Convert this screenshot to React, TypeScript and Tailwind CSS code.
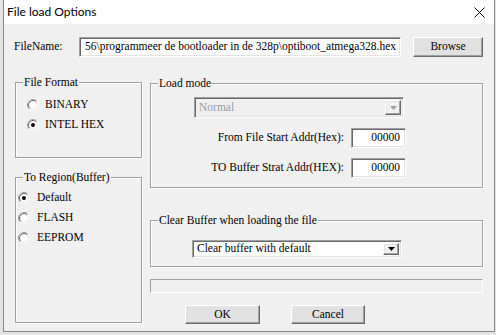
import React from "react";

const sunken =
  "border border-t-[#a0a0a0] border-l-[#a0a0a0] border-b-white border-r-white shadow-[inset_1px_1px_0_#696969,inset_-1px_-1px_0_#e3e3e3]";
const raised =
  "border border-t-white border-l-white border-b-[#696969] border-r-[#696969] shadow-[inset_-1px_-1px_0_#a0a0a0,inset_1px_1px_0_#e3e3e3]";
const etched = "border border-[#a0a0a0] shadow-[inset_1px_1px_0_#ffffff,1px_1px_0_#ffffff]";

function Radio({ checked }: { checked?: boolean }) {
  return (
    <svg width="12" height="12" viewBox="0 0 12 12" className="shrink-0">
      <circle cx="6" cy="6" r="5" fill="#ffffff" />
      <path d="M2.11 9.89 A5.5 5.5 0 0 1 9.89 2.11" fill="none" stroke="#a0a0a0" strokeWidth="1" />
      <path d="M2.82 9.18 A4.5 4.5 0 0 1 9.18 2.82" fill="none" stroke="#696969" strokeWidth="1" />
      <path d="M9.89 2.11 A5.5 5.5 0 0 1 2.11 9.89" fill="none" stroke="#ffffff" strokeWidth="1" />
      <path d="M9.18 2.82 A4.5 4.5 0 0 1 2.82 9.18" fill="none" stroke="#e3e3e3" strokeWidth="1" />
      {checked && <circle cx="6" cy="6" r="2" fill="#000000" />}
    </svg>
  );
}

function Group({
  label,
  className,
  children,
}: {
  label: string;
  className: string;
  children?: React.ReactNode;
}) {
  return (
    <div className={`relative ${etched} ${className}`}>
      <span className="absolute left-[7px] top-[-8px] px-[1px] bg-[#f0f0f0] leading-[14px] whitespace-nowrap">
        {label}
      </span>
      {children}
    </div>
  );
}

function Combo({
  text,
  disabled,
  className,
}: {
  text: string;
  disabled?: boolean;
  className: string;
}) {
  return (
    <div
      className={`${sunken} ${className} flex items-stretch p-[2px] ${
        disabled ? "bg-[#f0f0f0]" : "bg-white"
      }`}
    >
      <div
        className={`flex-1 flex items-center pl-[2px] ${
          disabled ? "text-[#9a9a9a]" : "text-black"
        }`}
      >
        {text}
      </div>
      <div className={`w-[16px] bg-[#f0f0f0] ${raised} flex items-center justify-center`}>
        <svg width="7" height="4" viewBox="0 0 7 4">
          <path d="M0 0 H7 L3.5 4 Z" fill={disabled ? "#a0a0a0" : "#000000"} />
        </svg>
      </div>
    </div>
  );
}

function Field({ label }: { label: string }) {
  return (
    <div className="flex justify-end items-center gap-[7px] pr-[76px]">
      <span className="whitespace-nowrap">{label}</span>
      <div className={`${sunken} bg-white w-[55px] h-[20px] flex items-center justify-end pr-[5px]`}>
        00000
      </div>
    </div>
  );
}

export default function App() {
  return (
    <div className="w-[496px] h-[335px] bg-[#e4e4e4] overflow-hidden text-[11.5px] text-black font-['Liberation_Serif','Times_New_Roman',serif]">
      <div className="ml-[3px] w-[492px] h-[332px] border border-t-0 border-[#8a8a8a] bg-[#f0f0f0] flex flex-col">
        {/* title bar */}
        <div className="h-[24px] bg-white flex items-center justify-between pl-[3px] pr-[9px] shrink-0">
          <span className="font-['Lato','Liberation_Sans',sans-serif] text-[12px] text-black">
            File load Options
          </span>
          <svg width="11" height="11" viewBox="0 0 11 11">
            <path d="M0.5 0.5 L10.5 10.5 M10.5 0.5 L0.5 10.5" stroke="#000" strokeWidth="1" />
          </svg>
        </div>

        {/* file name row */}
        <div className="mt-[13px] pl-[10px] flex items-center">
          <span className="w-[65px]">FileName:</span>
          <div
            className={`${sunken} bg-white w-[322px] h-[20px] flex items-center justify-end overflow-hidden whitespace-nowrap pr-[4px]`}
          >
            56\programmeer de bootloader in de 328p\optiboot_atmega328.hex
          </div>
          <div
            className={`${raised} ml-[12px] w-[70px] h-[20px] bg-[#e1e1e1] flex items-center justify-center`}
          >
            Browse
          </div>
        </div>

        {/* main */}
        <div className="mt-[25px] pl-[11px] flex gap-[8px]">
          <div className="w-[127px] flex flex-col">
            <Group label="File Format" className="h-[76px] pt-[12px] pl-[11px]">
              <div className="h-[20px] flex items-center gap-[6px]">
                <Radio />
                <span>BINARY</span>
              </div>
              <div className="h-[20px] flex items-center gap-[6px]">
                <Radio checked />
                <span>INTEL HEX</span>
              </div>
            </Group>
            <Group label="To Region(Buffer)" className="mt-[19px] h-[146px] pt-[10px] pl-[2px]">
              <div className="h-[20px] flex items-center gap-[7px]">
                <Radio checked />
                <span>Default</span>
              </div>
              <div className="h-[20px] flex items-center gap-[7px]">
                <Radio />
                <span>FLASH</span>
              </div>
              <div className="h-[20px] flex items-center gap-[7px]">
                <Radio />
                <span>EEPROM</span>
              </div>
            </Group>
          </div>

          <div className="w-[333px] flex flex-col mt-[1px]">
            <Group label="Load mode" className="h-[105px] flex flex-col">
              <Combo text="Normal" disabled className="ml-[43px] mt-[13px] w-[210px] h-[21px]" />
              <div className="mt-[10px]">
                <Field label="From File Start Addr(Hex):" />
              </div>
              <div className="mt-[10px]">
                <Field label="TO Buffer Strat Addr(HEX):" />
              </div>
            </Group>
            <Group label="Clear Buffer when loading the file" className="mt-[32px] h-[47px] flex flex-col">
              <Combo text="Clear buffer with default" className="ml-[41px] mt-[19px] w-[210px] h-[18px]" />
            </Group>
            <div className="mt-[12px] h-[14px] border border-t-[#a0a0a0] border-l-[#a0a0a0] border-b-white border-r-white" />
            <div className="mt-[12px] flex pl-[35px]">
              <div className={`${raised} w-[75px] h-[19px] bg-[#e1e1e1] flex items-center justify-center`}>
                OK
              </div>
              <div
                className={`${raised} ml-[31px] w-[74px] h-[19px] bg-[#e1e1e1] flex items-center justify-center`}
              >
                Cancel
              </div>
            </div>
          </div>
        </div>
      </div>
    </div>
  );
}
